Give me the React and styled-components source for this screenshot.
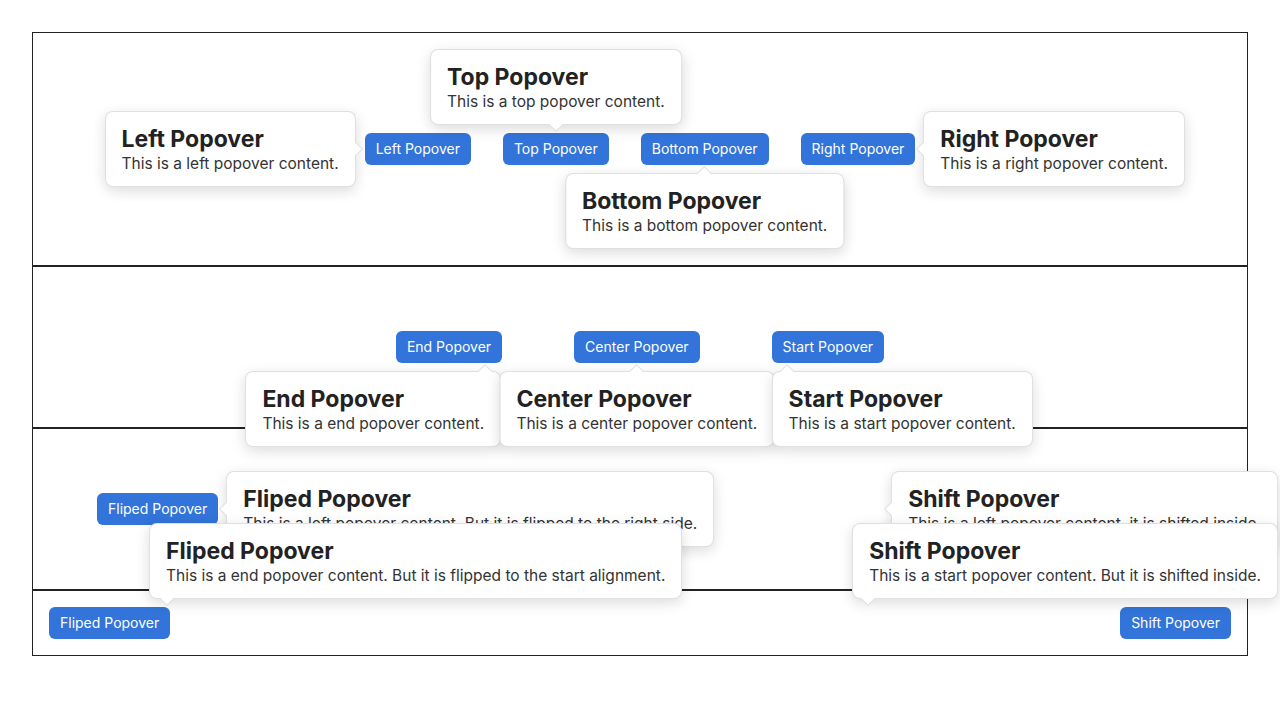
import React from "react";
import styled, { createGlobalStyle, css } from "styled-components";

const GlobalStyle = createGlobalStyle`
  *, *::before, *::after { box-sizing: border-box; }
  html, body { margin: 0; padding: 0; background: #fff; }
  body { font-family: Inter, "Noto Sans", sans-serif; color: #222; }
`;

const Page = styled.div`
  padding: 32px;
`;

const Section = styled.section`
  height: ${(p) => p.$h}px;
  border: 1px solid #222;
  display: flex;
  align-items: center;
  justify-content: ${(p) => p.$justify || "center"};
  gap: ${(p) => p.$gap || 0}px;
  padding: 0 ${(p) => p.$pad || 0}px;
`;

const Anchor = styled.span`
  position: relative;
  display: inline-flex;
`;

const Trigger = styled.button`
  height: 32px;
  padding: 0 11px;
  border: none;
  border-radius: 6px;
  background: #3274d9;
  color: #fff;
  font: 400 14px/1 Inter, "Noto Sans", sans-serif;
  white-space: nowrap;
`;

// where the box sits next to its button
const placement = ({ $place, $align, $x }) => {
  if ($place === "left")
    return css`
      right: calc(100% + 9px);
      top: 50%;
      transform: translateY(-50%);
    `;
  if ($place === "right")
    return css`
      left: ${$x !== undefined ? `${$x}px` : "calc(100% + 8px)"};
      top: 50%;
      transform: translateY(-50%);
    `;
  const vertical =
    $place === "top" ? "bottom: calc(100% + 8px);" : "top: calc(100% + 8px);";
  if ($x !== undefined)
    return css`
      ${vertical}
      left: ${$x}px;
    `;
  if ($align === "start")
    return css`
      ${vertical}
      left: 0;
    `;
  if ($align === "end")
    return css`
      ${vertical}
      right: 1px;
    `;
  return css`
    ${vertical}
    left: 50%;
    transform: translateX(-50%);
  `;
};

// the little pointer on the edge facing the button
const arrow = ({ $place, $arrow = "50%" }) => {
  if ($place === "top")
    return css`
      bottom: -6px;
      left: calc(${$arrow} - 5px);
      border-right-width: 1px;
      border-bottom-width: 1px;
    `;
  if ($place === "bottom")
    return css`
      top: -6px;
      left: calc(${$arrow} - 5px);
      border-top-width: 1px;
      border-left-width: 1px;
    `;
  if ($place === "left")
    return css`
      right: -6px;
      top: calc(50% - 5px);
      border-top-width: 1px;
      border-right-width: 1px;
    `;
  return css`
    left: -6px;
    top: calc(50% - 5px);
    border-bottom-width: 1px;
    border-left-width: 1px;
  `;
};

const Popover = styled.div`
  position: absolute;
  z-index: 1;
  padding: 13px 16px 11px;
  background: #fff;
  border: 1px solid rgba(0, 0, 0, 0.12);
  border-radius: 8px;
  box-shadow: 0 4px 14px rgba(0, 0, 0, 0.14);
  white-space: nowrap;
  text-align: left;
  ${placement}

  &::before {
    content: "";
    position: absolute;
    width: 10px;
    height: 10px;
    background: #fff;
    border: 0 solid rgba(0, 0, 0, 0.12);
    transform: rotate(45deg);
    ${arrow}
  }
`;

const Title = styled.div`
  font-size: 23px;
  font-weight: 700;
  line-height: 28px;
  color: #222;
`;

const Body = styled.div`
  font-size: 15.5px;
  line-height: 22px;
  color: #333;
`;

function Pop({ label, title, text, ...pos }) {
  return (
    <Anchor>
      <Trigger>{label}</Trigger>
      <Popover {...pos}>
        <Title>{title}</Title>
        <Body>{text}</Body>
      </Popover>
    </Anchor>
  );
}

export default function App() {
  return (
    <>
      <GlobalStyle />
      <Page>
        <Section $h={234} $gap={32}>
          <Pop
            label="Left Popover"
            title="Left Popover"
            text="This is a left popover content."
            $place="left"
          />
          <Pop
            label="Top Popover"
            title="Top Popover"
            text="This is a top popover content."
            $place="top"
          />
          <Pop
            label="Bottom Popover"
            title="Bottom Popover"
            text="This is a bottom popover content."
            $place="bottom"
          />
          <Pop
            label="Right Popover"
            title="Right Popover"
            text="This is a right popover content."
            $place="right"
          />
        </Section>

        <Section $h={162} $gap={72}>
          <Pop
            label="End Popover"
            title="End Popover"
            text="This is a end popover content."
            $place="bottom"
            $align="end"
            $arrow="calc(100% - 15px)"
          />
          <Pop
            label="Center Popover"
            title="Center Popover"
            text="This is a center popover content."
            $place="bottom"
          />
          <Pop
            label="Start Popover"
            title="Start Popover"
            text="This is a start popover content."
            $place="bottom"
            $align="start"
            $arrow="14px"
          />
        </Section>

        <Section $h={162} $justify="space-between" $pad={64}>
          <Pop
            label="Fliped Popover"
            title="Fliped Popover"
            text="This is a left popover content. But it is flipped to the right side."
            $place="right"
          />
          <Pop
            label="Shift Popover"
            title="Shift Popover"
            text="This is a left popover content, it is shifted inside."
            $place="right"
            $x={-181}
          />
        </Section>

        <Section $h={66} $justify="space-between" $pad={16}>
          <Pop
            label="Fliped Popover"
            title="Fliped Popover"
            text="This is a end popover content. But it is flipped to the start alignment."
            $place="top"
            $x={100}
            $arrow="17px"
          />
          <Pop
            label="Shift Popover"
            title="Shift Popover"
            text="This is a start popover content. But it is shifted inside."
            $place="top"
            $x={-268}
            $arrow="15px"
          />
        </Section>
      </Page>
    </>
  );
}
